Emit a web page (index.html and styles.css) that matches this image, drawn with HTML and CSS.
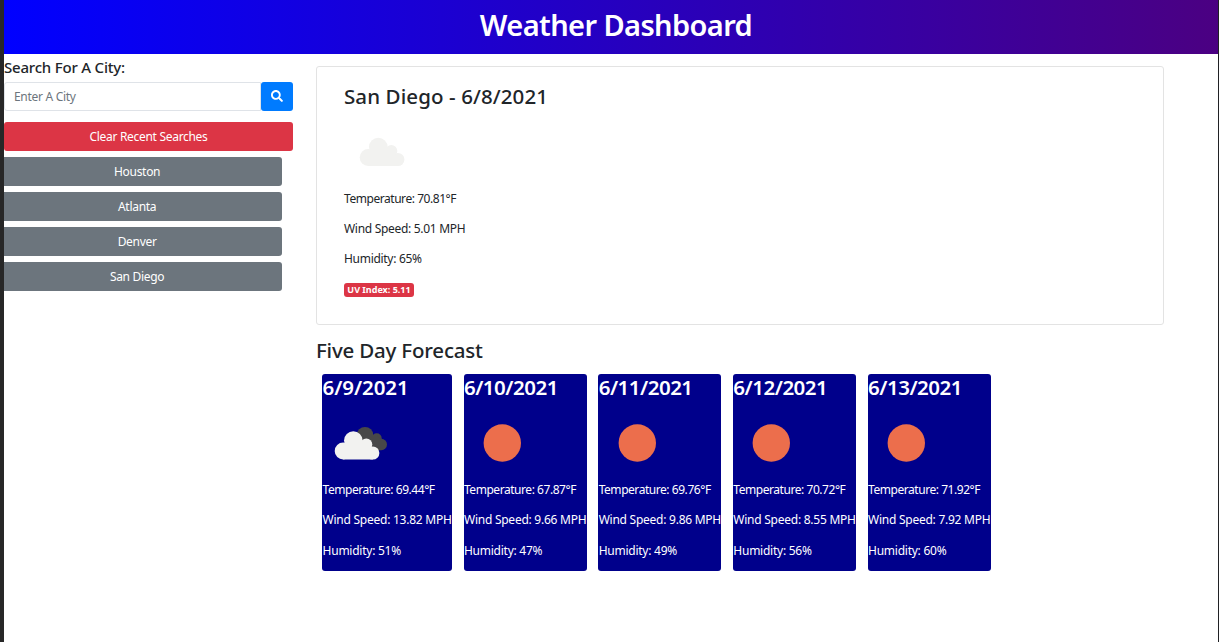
FILE: index.html
```
<!DOCTYPE html>
<html lang="en">
<head>
<meta charset="utf-8">
<title>Weather Dashboard</title>
<link rel="stylesheet" href="styles.css">
</head>
<body>
<svg width="0" height="0" class="defs">
  <symbol id="cloud" viewBox="0 0 75 75">
    <circle cx="34.3" cy="32" r="9.3"/><circle cx="24.2" cy="42.5" r="8.5"/><circle cx="47.3" cy="36" r="6"/><circle cx="53.8" cy="44.5" r="6.6"/><path d="M24.2 51V36h10l13 0 6.600 5V51.1H24.2z"/>
  </symbol>
  <symbol id="sun" viewBox="0 0 75 75"><circle cx="38.3" cy="37" r="18.7"/></symbol>
</svg>
<header class="banner"><h1>Weather Dashboard</h1></header>
<main class="layout">
  <aside class="sidebar">
    <h2 class="search-title">Search For A City:</h2>
    <form class="search">
      <input class="search-input" type="text" placeholder="Enter A City">
      <button class="search-btn" type="button" aria-label="Search"><svg viewBox="0 0 512 512" width="12" height="12" fill="#fff"><path d="M505 442.700L405.300 343c-4.500-4.500-10.600-7-17-7H372c27.600-35.300 44-79.700 44-128C416 93.100 322.900 0 208 0S0 93.100 0 208s93.100 208 208 208c48.300 0 92.700-16.400 128-44v16.300c0 6.400 2.500 12.500 7 17l99.700 99.700c9.400 9.400 24.600 9.400 33.900 0l28.300-28.300c9.400-9.400 9.400-24.600.100-34zM208 336c-70.700 0-128-57.200-128-128 0-70.700 57.200-128 128-128 70.700 0 128 57.200 128 128 0 70.700-57.200 128-128 128z"/></svg></button>
    </form>
    <button class="btn btn-clear" type="button">Clear Recent Searches</button>
    <div class="history">
      <button class="btn" type="button">Houston</button>
      <button class="btn" type="button">Atlanta</button>
      <button class="btn" type="button">Denver</button>
      <button class="btn" type="button">San Diego</button>
    </div>
  </aside>
  <section class="content">
    <article class="current">
      <h2 class="heading city">San Diego - 6/8/2021</h2>
      <svg class="icon" fill="#f2f2f0"><use href="#cloud"/></svg>
      <p class="temp">Temperature: 70.81°F</p>
      <p>Wind Speed: 5.01 MPH</p>
      <p>Humidity: 65%</p>
      <span class="badge">UV Index: 5.11</span>
    </article>
    <h2 class="heading forecast-title">Five Day Forecast</h2>
    <div class="forecast">
      <article class="day day-wide">
        <h3 class="heading">6/9/2021</h3>
        <svg class="icon"><g fill="#484848"><circle cx="42" cy="29.200" r="8.300"/><circle cx="53.700" cy="32.200" r="5"/><circle cx="58.300" cy="38.500" r="5.700"/><path d="M40 29h14l4 5v10.200H45z"/></g><use href="#cloud" x="-4" y="2.500" width="75" height="75" fill="#f2f2f0"/></svg>
        <p class="temp">Temperature: 69.44°F</p><p>Wind Speed: 13.82 MPH</p><p>Humidity: 51%</p>
      </article>
      <article class="day">
        <h3 class="heading">6/10/2021</h3>
        <svg class="icon" fill="#ec6e4c"><use href="#sun"/></svg>
        <p class="temp">Temperature: 67.87°F</p><p>Wind Speed: 9.66 MPH</p><p>Humidity: 47%</p>
      </article>
      <article class="day">
        <h3 class="heading">6/11/2021</h3>
        <svg class="icon" fill="#ec6e4c"><use href="#sun"/></svg>
        <p class="temp">Temperature: 69.76°F</p><p>Wind Speed: 9.86 MPH</p><p>Humidity: 49%</p>
      </article>
      <article class="day">
        <h3 class="heading">6/12/2021</h3>
        <svg class="icon" fill="#ec6e4c"><use href="#sun"/></svg>
        <p class="temp">Temperature: 70.72°F</p><p>Wind Speed: 8.55 MPH</p><p>Humidity: 56%</p>
      </article>
      <article class="day">
        <h3 class="heading">6/13/2021</h3>
        <svg class="icon" fill="#ec6e4c"><use href="#sun"/></svg>
        <p class="temp">Temperature: 71.92°F</p><p>Wind Speed: 7.92 MPH</p><p>Humidity: 60%</p>
      </article>
    </div>
  </section>
</main>
</body>
</html>
```
FILE: styles.css
```
* { box-sizing: border-box; margin: 0; }
body {
  height: 642px;
  overflow: hidden;
  border-left: 4px solid #272727;
  border-right: 1px solid #202124;
  background: #fff;
  color: #212529;
  font: 12px/18px "Noto Sans", "Open Sans", sans-serif;
  letter-spacing: -0.3px;
}
.defs { display: block; position: absolute; }
.banner {
  height: 54px;
  padding: 7px 0 0 10px;
  background: linear-gradient(to right, blue, indigo);
  color: #fff;
  text-align: center;
}
.banner h1 { font-size: 29px; font-weight: 600; line-height: 36px; letter-spacing: -0.600px; }
.layout { display: flex; }
.sidebar { width: 289px; margin-right: 23px; padding-top: 4px; overflow: hidden; }
.search-title { font-size: 15px; font-weight: 500; line-height: 18px; letter-spacing: -0.2px; white-space: nowrap; }
.search { display: flex; height: 29px; margin-top: 5.600px; }
.search-input {
  flex: 1;
  min-width: 0;
  padding: 1px 9px 0;
  border: 1px solid #dfe3e8;
  border-radius: 3px 0 0 3px;
  font: inherit;
  letter-spacing: inherit;
}
.search-input::placeholder { color: #6c757d; opacity: 1; }
.search-btn {
  display: flex;
  align-items: center;
  justify-content: center;
  width: 32px;
  padding: 0;
  border: 0;
  border-radius: 3px;
  background: #007bff;
}
.btn {
  display: block;
  width: 289px;
  height: 29px;
  padding: 0;
  border: 0;
  border-radius: 3px;
  background: #6c757d;
  color: #fff;
  font: inherit;
  letter-spacing: inherit;
}
.btn-clear { margin-top: 11.500px; background: #dc3545; }
.history { display: grid; gap: 6px; margin: 6px 0 0 -11.400px; }
.current {
  width: 848px;
  height: 259px;
  margin-top: 12px;
  padding: 16px 27px;
  border: 1px solid #e3e3e3;
  border-radius: 3px;
}
.heading { font-size: 20.500px; font-weight: 500; line-height: 26px; letter-spacing: -0.2px; }
.city { letter-spacing: 0.1px; }
.icon { display: block; width: 75px; height: 75px; }
.current .icon { margin-top: 6px; }
.current p { margin-bottom: 12px; }
.current .temp, .day .temp { letter-spacing: -0.450px; }
.badge {
  display: block;
  width: 70px;
  height: 14px;
  margin-top: 15px;
  border-radius: 3px;
  background: #dc3545;
  color: #fff;
  font-size: 9px;
  font-weight: 700;
  line-height: 14px;
  letter-spacing: 0;
  text-align: center;
  white-space: nowrap;
}
.forecast-title { margin-top: 12px; }
.forecast { display: flex; gap: 11.700px; margin: 11px 0 0 6.300px; }
.day {
  width: 123px;
  height: 197px;
  padding-left: 0.300px;
  border-radius: 3px;
  background: #00008b;
  color: #fff;
  white-space: nowrap;
  letter-spacing: -0.250px;
}
.day-wide { width: 129.700px; }
.day .heading { font-weight: 600; letter-spacing: -0.500px; }
.day-wide .heading { letter-spacing: -0.100px; }
.day .icon { margin: 6px 0 0 0; }
.day p { margin-bottom: 12.300px; }
```
